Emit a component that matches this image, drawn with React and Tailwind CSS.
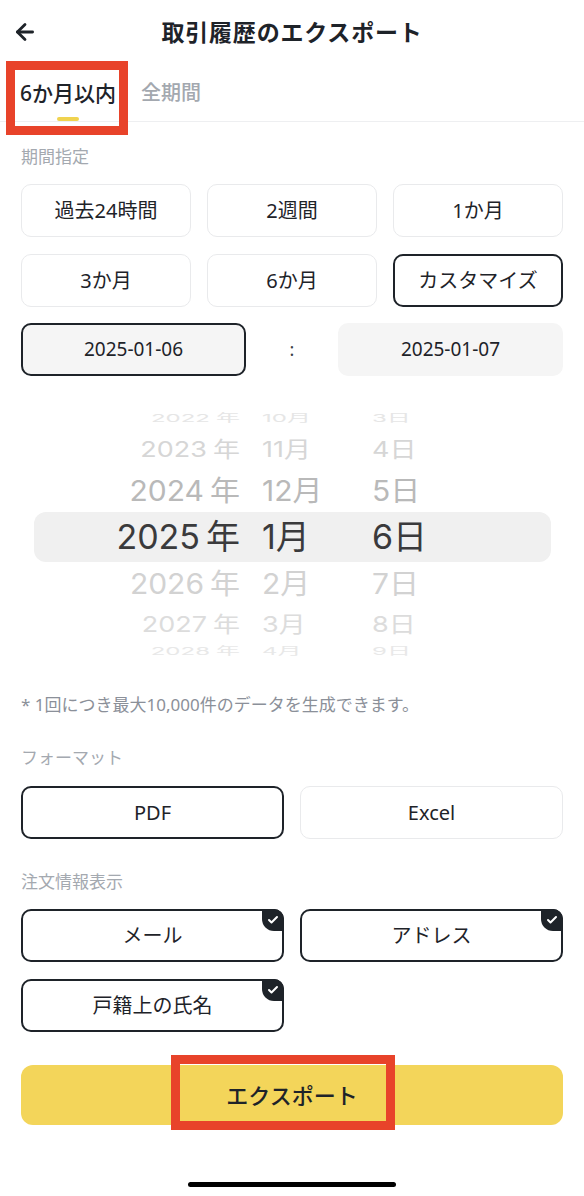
import React from 'react';
import { ArrowLeft, Check } from 'lucide-react';

const FONT = { fontFamily: '"Noto Sans", "Noto Sans CJK JP", sans-serif' };

const periods = ['過去24時間', '2週間', '1か月', '3か月', '6か月', 'カスタマイズ'];

// wheel rows: year / month / day, with size + colour for the fake 3D wheel
const wheel = [
  { y: '2022', m: '10', d: '3', h: 'h-[22px]', size: 'text-[24px]', squash: 'scale-y-[0.45]', c: 'text-[#e6e6e6]' },
  { y: '2023', m: '11', d: '4', h: 'h-[40px]', size: 'text-[27px]', squash: 'scale-y-[0.8]', c: 'text-[#d6d6d6]' },
  { y: '2024', m: '12', d: '5', h: 'h-[43px]', size: 'text-[30px]', squash: 'scale-y-[0.95]', c: 'text-[#b9b9b9]' },
  { y: '2025', m: '1', d: '6', h: 'h-[50px]', size: 'text-[34px]', squash: '', c: 'text-[#3a3a3c]', sel: true },
  { y: '2026', m: '2', d: '7', h: 'h-[43px]', size: 'text-[30px]', squash: 'scale-y-[0.95]', c: 'text-[#d2d2d2]' },
  { y: '2027', m: '3', d: '8', h: 'h-[38px]', size: 'text-[27px]', squash: 'scale-y-[0.8]', c: 'text-[#dcdcdc]' },
  { y: '2028', m: '4', d: '9', h: 'h-[16px]', size: 'text-[24px]', squash: 'scale-y-[0.45]', c: 'text-[#e8e8e8]' },
];

function CheckBadge() {
  return (
    <span className="absolute -top-[2px] -right-[2px] w-[22px] h-[22px] bg-[#1e2329] rounded-tr-[10px] rounded-bl-[12px] flex items-center justify-center">
      <Check size={12} strokeWidth={4} className="text-white" />
    </span>
  );
}

export default function App() {
  return (
    <div className="w-[584px] h-[1196px] bg-white text-[#1e2329] overflow-hidden" style={FONT}>
      {/* Header */}
      <div className="relative h-[64px] flex items-center justify-center">
        <ArrowLeft size={26} strokeWidth={2.6} className="absolute left-[12px] top-[19px]" />
        <h1 className="text-[23px] font-bold tracking-[0.8px]">取引履歴のエクスポート</h1>
      </div>

      {/* Tabs */}
      <div className="h-[58px] border-b border-[#eeeff1] flex pl-[20px] gap-[25px]">
        <div className="relative flex flex-col items-center pt-[17px]">
          <span className="text-[21px] leading-[24px] font-medium">6か月以内</span>
          <span className="mt-[12px] w-[22px] h-[4px] rounded-full bg-[#f0d34f]"></span>
          <div className="absolute -left-[14px] -right-[12px] -top-[3px] -bottom-[14px] border-[9px] border-[#e8432a]"></div>
        </div>
        <div className="pt-[17px] text-[20px] leading-[24px] font-medium text-[#a3a8af]">全期間</div>
      </div>

      <div className="px-[21px]">
        <p className="mt-[23px] text-[17px] leading-[24px] text-[#a4a9b0]">期間指定</p>

        <div className="mt-[15px] grid grid-cols-3 gap-x-[16px] gap-y-[17px]">
          {periods.map((p) => {
            const active = p === 'カスタマイズ';
            return (
              <div
                key={p}
                className={`h-[53px] rounded-[10px] flex items-center justify-center text-[20px] ${
                  active ? 'border-2 border-[#1e2329]' : 'border border-[#e9eaec]'
                }`}
              >
                {p}
              </div>
            );
          })}
        </div>

        <div className="mt-[16px] flex items-center justify-between">
          <div className="w-[225px] h-[53px] rounded-[10px] bg-[#f5f5f5] border-2 border-[#1e2329] flex items-center justify-center text-[19px]">
            2025-01-06
          </div>
          <span className="text-[18px] text-[#3a3f45]">:</span>
          <div className="w-[225px] h-[53px] rounded-[10px] bg-[#f5f5f5] flex items-center justify-center text-[19px]">
            2025-01-07
          </div>
        </div>

        {/* Date wheel */}
        <div className="mt-[31px] h-[249px] overflow-hidden ml-[13px] mr-[12px]" style={{ fontFamily: 'Inter, "Noto Sans CJK JP", sans-serif' }}>
          {wheel.map((r) => (
            <div
              key={r.y}
              className={`${r.h} flex items-center ${r.c} ${r.sel ? 'bg-[#f0f0f0] rounded-[12px]' : ''}`}
            >
              <div className={`w-[206px] shrink-0 text-right ${r.size} ${r.squash} leading-none whitespace-nowrap`}>
                {r.y}<span className="ml-[6px]">年</span>
              </div>
              <div className="w-[22px] shrink-0"></div>
              <div className={`w-[110px] shrink-0 ${r.size} ${r.squash} leading-none`}>{r.m}月</div>
              <div className={`${r.size} ${r.squash} leading-none`}>{r.d}日</div>
            </div>
          ))}
        </div>

        <p className="mt-[37px] text-[17px] leading-[24px] text-[#8b9099]">* 1回につき最大10,000件のデータを生成できます。</p>

        <p className="mt-[29px] text-[17px] leading-[24px] text-[#a4a9b0]">フォーマット</p>
        <div className="mt-[16px] grid grid-cols-2 gap-[16px]">
          <div className="h-[53px] rounded-[10px] border-2 border-[#1e2329] flex items-center justify-center text-[20px]">PDF</div>
          <div className="h-[53px] rounded-[10px] border border-[#e9eaec] flex items-center justify-center text-[20px]">Excel</div>
        </div>

        <p className="mt-[31px] text-[17px] leading-[24px] text-[#a4a9b0]">注文情報表示</p>
        <div className="mt-[15px] grid grid-cols-2 gap-x-[16px] gap-y-[17px]">
          {['メール', 'アドレス', '戸籍上の氏名'].map((t) => (
            <div key={t} className="relative h-[53px] rounded-[10px] border-2 border-[#1e2329] flex items-center justify-center text-[20px]">
              {t}
              <CheckBadge />
            </div>
          ))}
        </div>

        <div className="relative mt-[33px] h-[60px] rounded-[12px] bg-[#f3d55a] flex items-center justify-center text-[22px] font-medium">
          エクスポート
          <div className="absolute left-[150px] -top-[10px] w-[224px] h-[75px] border-[9px] border-[#e8432a]"></div>
        </div>
      </div>

      <div className="mt-[57px] mx-auto w-[208px] h-[5px] rounded-full bg-black"></div>
    </div>
  );
}
